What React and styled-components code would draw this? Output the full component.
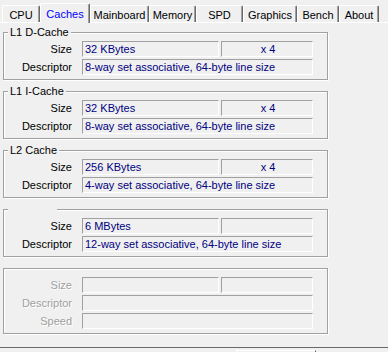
import React from "react";
import styled, { createGlobalStyle } from "styled-components";

const GlobalStyle = createGlobalStyle`
  html, body { margin: 0; padding: 0; background: #f0f0f0; }
  body { font-family: "Liberation Sans", Arial, sans-serif; font-size: 11px; color: #000; }
`;

const Window = styled.div`
  width: 388px;
  height: 352px;
  overflow: hidden;
  background: #f0f0f0;
  display: flex;
  flex-direction: column;
`;

const TabStrip = styled.div`
  display: flex;
  align-items: flex-end;
  height: 22px;
  padding-left: 2px;
  flex: none;
`;

const Tab = styled.div`
  position: relative;
  z-index: ${(p) => (p.$active ? 1 : 0)};
  box-sizing: border-box;
  width: ${(p) => p.$w}px;
  height: ${(p) => (p.$active ? 20 : 17)}px;
  margin-bottom: ${(p) => (p.$active ? -1 : 0)}px;
  padding-top: ${(p) => (p.$active ? 4 : 3)}px;
  background: #f0f0f0;
  border-top: 1px solid #fff;
  border-left: 1px solid #fff;
  border-right: 1px solid #696969;
  box-shadow: inset -1px 0 0 #a0a0a0;
  border-radius: 2px 2px 0 0;
  display: flex;
  justify-content: center;
  line-height: 13px;
  white-space: nowrap;
  color: ${(p) => (p.$active ? "#0000ff" : "#000")};
`;

const Page = styled.div`
  box-sizing: border-box;
  height: 326px;
  flex: none;
  border-top: 1px solid #fff;
  border-bottom: 1px solid #696969;
  padding-top: 9px;
  display: flex;
  flex-direction: column;
  gap: 11px;
`;

const Box = styled.div`
  position: relative;
  box-sizing: border-box;
  width: 325px;
  margin-left: 3px;
  border: 1px solid #a0a0a0;
  box-shadow: inset 1px 1px 0 #fff, 1px 1px 0 #fff;
  padding: 8px 0 4px 0;
  display: flex;
  flex-direction: column;
  gap: 2px;
`;

const Legend = styled.span`
  position: absolute;
  top: -8px;
  left: 4px;
  height: 14px;
  line-height: 14px;
  padding: 0 2px;
  min-width: ${(p) => p.$w || 0}px;
  background: #f0f0f0;
  white-space: nowrap;
`;

const Row = styled.div`
  display: flex;
  align-items: center;
  height: 16px;
`;

const Label = styled.div`
  width: 68px;
  margin-right: 10px;
  text-align: right;
  white-space: nowrap;
  line-height: 14px;
  color: ${(p) => (p.$disabled ? "#a0a0a0" : "#000")};
  text-shadow: ${(p) => (p.$disabled ? "1px 1px 0 #fff" : "none")};
`;

const Fields = styled.div`
  display: flex;
  gap: 2px;
`;

const Field = styled.div`
  box-sizing: border-box;
  width: ${(p) => p.$w}px;
  height: 16px;
  border-top: 1px solid #a0a0a0;
  border-left: 1px solid #a0a0a0;
  border-bottom: 1px solid #fff;
  border-right: 1px solid #fff;
  padding-left: 2px;
  line-height: 14px;
  white-space: nowrap;
  overflow: hidden;
  color: #000080;
  text-align: ${(p) => (p.$center ? "center" : "left")};
`;

const Footer = styled.div`
  flex: none;
  padding: 2px 0 0 236px;
`;

const FooterButton = styled.div`
  box-sizing: border-box;
  width: 80px;
  height: 6px;
  border-top: 1px solid #fff;
  border-left: 1px solid #fff;
  border-right: 1px solid #696969;
`;

const tabs = [
  ["CPU", 38],
  ["Caches", 50],
  ["Mainboard", 59],
  ["Memory", 47],
  ["SPD", 47],
  ["Graphics", 54],
  ["Bench", 42],
  ["About", 40],
];

const caches = [
  { title: "L1 D-Cache", size: "32 KBytes", count: "x 4", desc: "8-way set associative, 64-byte line size" },
  { title: "L1 I-Cache", size: "32 KBytes", count: "x 4", desc: "8-way set associative, 64-byte line size" },
  { title: "L2 Cache", size: "256 KBytes", count: "x 4", desc: "4-way set associative, 64-byte line size" },
  { title: "", gap: 45, size: "6 MBytes", count: "", desc: "12-way set associative, 64-byte line size" },
];

function SizeRow({ label, size, count, disabled }) {
  return (
    <Row>
      <Label $disabled={disabled}>{label}</Label>
      <Fields>
        <Field $w={137}>{size}</Field>
        <Field $w={92} $center>{count}</Field>
      </Fields>
    </Row>
  );
}

function WideRow({ label, value, disabled }) {
  return (
    <Row>
      <Label $disabled={disabled}>{label}</Label>
      <Field $w={231}>{value}</Field>
    </Row>
  );
}

export default function App() {
  return (
    <>
      <GlobalStyle />
      <Window>
        <TabStrip>
          {tabs.map(([name, w]) => (
            <Tab key={name} $w={w} $active={name === "Caches"}>
              {name}
            </Tab>
          ))}
        </TabStrip>
        <Page>
          {caches.map((c, i) => (
            <Box key={i}>
              <Legend $w={c.gap}>{c.title}</Legend>
              <SizeRow label="Size" size={c.size} count={c.count} />
              <WideRow label="Descriptor" value={c.desc} />
            </Box>
          ))}
          <Box>
            <SizeRow label="Size" size="" count="" disabled />
            <WideRow label="Descriptor" value="" disabled />
            <WideRow label="Speed" value="" disabled />
          </Box>
        </Page>
        <Footer>
          <FooterButton />
        </Footer>
      </Window>
    </>
  );
}
